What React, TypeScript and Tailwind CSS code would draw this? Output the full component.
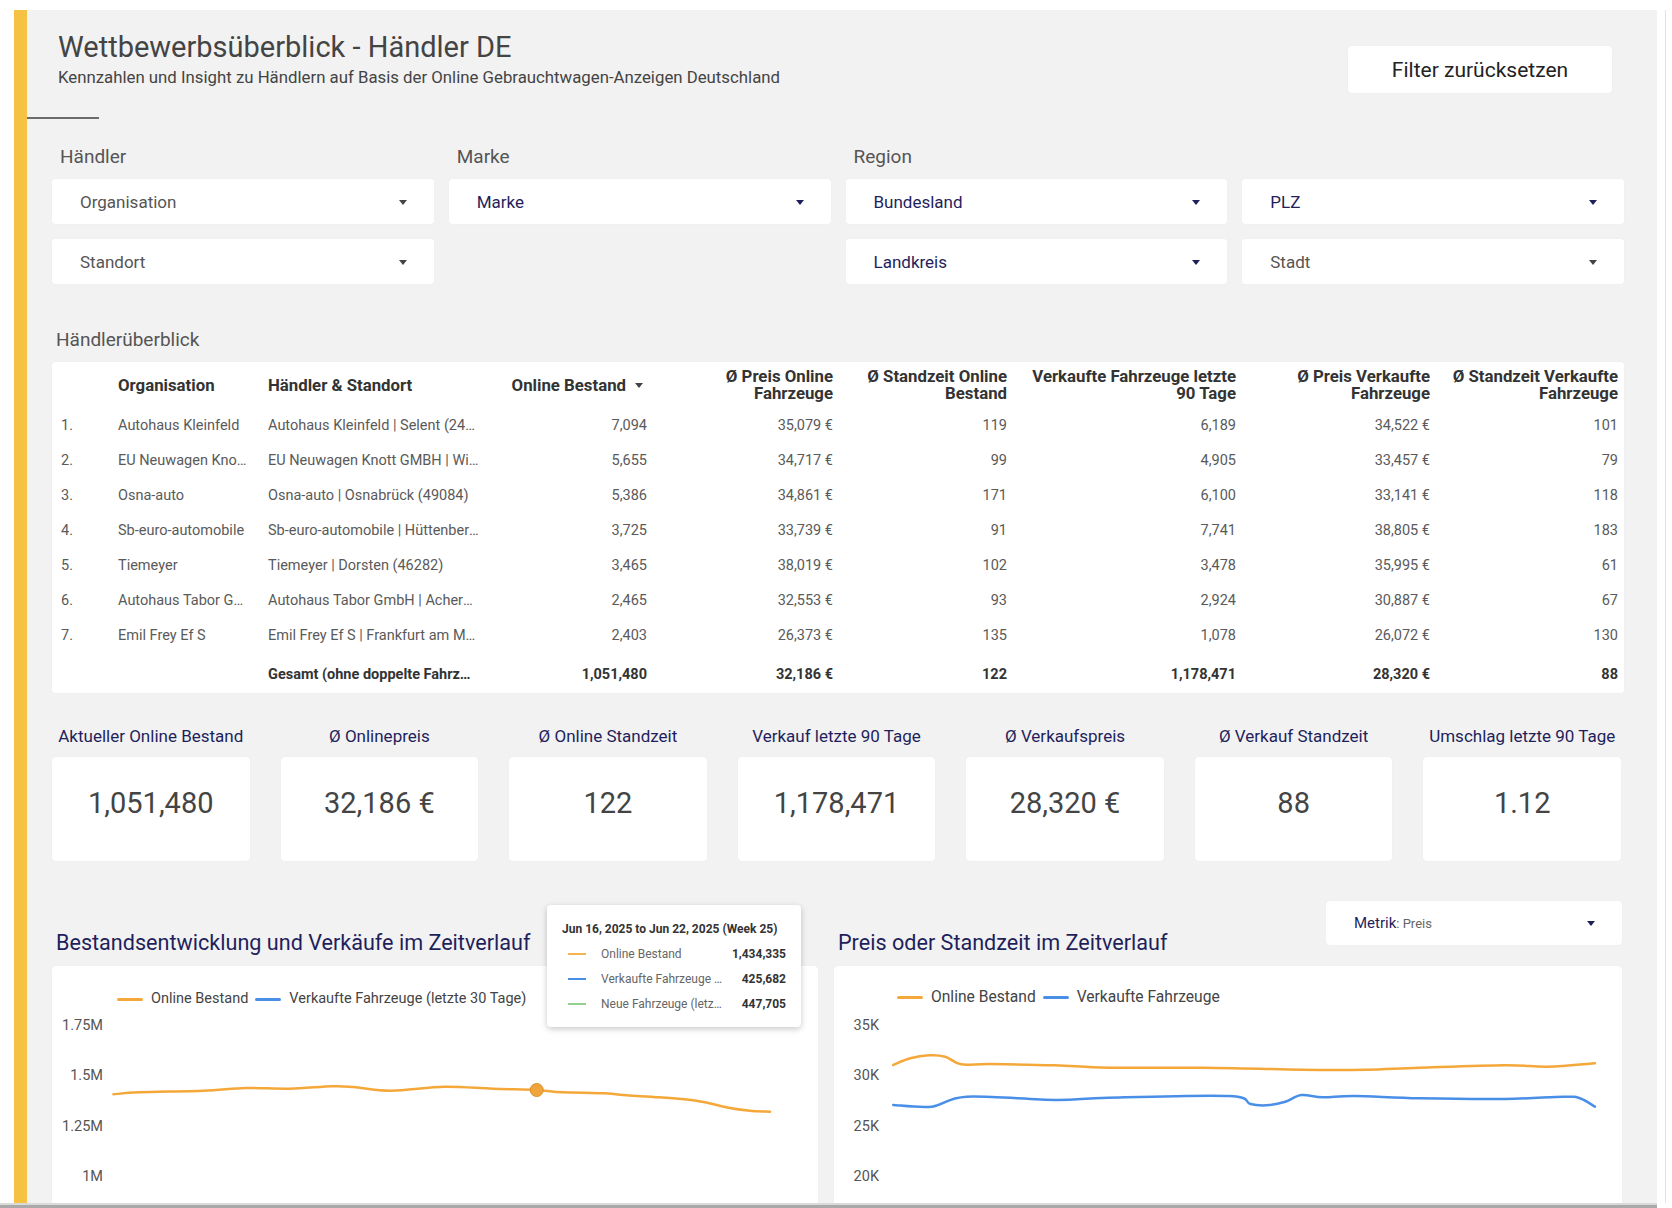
// Wettbewerbsüberblick dashboard — Looker-style report page with filters,
// dealer table, KPI tiles and two time-series charts.

type Pt = [number, number];

type DealerRow = {
  org: string;
  dealer: string;
  stock: string;
  price: string;
  days: string;
  sold: string;
  soldPrice: string;
  soldDays: string;
};

const ROWS: DealerRow[] = [
  { org: 'Autohaus Kleinfeld', dealer: 'Autohaus Kleinfeld | Selent (24238)', stock: '7,094', price: '35,079 €', days: '119', sold: '6,189', soldPrice: '34,522 €', soldDays: '101' },
  { org: 'EU Neuwagen Knott GMBH', dealer: 'EU Neuwagen Knott GMBH | Wittlich (54516)', stock: '5,655', price: '34,717 €', days: '99', sold: '4,905', soldPrice: '33,457 €', soldDays: '79' },
  { org: 'Osna-auto', dealer: 'Osna-auto | Osnabrück (49084)', stock: '5,386', price: '34,861 €', days: '171', sold: '6,100', soldPrice: '33,141 €', soldDays: '118' },
  { org: 'Sb-euro-automobile', dealer: 'Sb-euro-automobile | Hüttenberg (35625)', stock: '3,725', price: '33,739 €', days: '91', sold: '7,741', soldPrice: '38,805 €', soldDays: '183' },
  { org: 'Tiemeyer', dealer: 'Tiemeyer | Dorsten (46282)', stock: '3,465', price: '38,019 €', days: '102', sold: '3,478', soldPrice: '35,995 €', soldDays: '61' },
  { org: 'Autohaus Tabor GmbH', dealer: 'Autohaus Tabor GmbH | Achern (77855)', stock: '2,465', price: '32,553 €', days: '93', sold: '2,924', soldPrice: '30,887 €', soldDays: '67' },
  { org: 'Emil Frey Ef S', dealer: 'Emil Frey Ef S | Frankfurt am Main (60314)', stock: '2,403', price: '26,373 €', days: '135', sold: '1,078', soldPrice: '26,072 €', soldDays: '130' },
];

const KPIS = [
  { label: 'Aktueller Online Bestand', value: '1,051,480' },
  { label: 'Ø Onlinepreis', value: '32,186 €' },
  { label: 'Ø Online Standzeit', value: '122' },
  { label: 'Verkauf letzte 90 Tage', value: '1,178,471' },
  { label: 'Ø Verkaufspreis', value: '28,320 €' },
  { label: 'Ø Verkauf Standzeit', value: '88' },
  { label: 'Umschlag letzte 90 Tage', value: '1.12' },
];

// Chart points are in card-relative pixels (card top-left = 0,0).
const STOCK_LINE: Pt[] = [
  [61.5, 128.3], [87, 126.3], [151.5, 124.7], [194, 122], [237, 122.7], [280, 120.3],
  [301.5, 121], [339, 124.7], [392.5, 120.7], [440.8, 122.7], [484.7, 124], [510.4, 126.3],
  [553, 127.3], [574.7, 129.3], [606.8, 131.3], [644.3, 134.7], [676.4, 141.7], [697.9, 144.7], [718, 145.7],
];

const PRICE_ONLINE: Pt[] = [
  [59.2, 99], [76.3, 92.3], [95, 89.3], [111.2, 90.7], [127.2, 98.3], [156.7, 98], [221, 99.3],
  [274.5, 101.7], [370.9, 101.7], [467.3, 103.7], [531.6, 103.7], [585.2, 101.7], [670.9, 99.3],
  [713.7, 100.7], [760.9, 97.3],
];

const PRICE_SOLD: Pt[] = [
  [59.2, 139], [97.8, 140.7], [132.6, 130.7], [221, 134], [274.5, 131.7], [395, 130],
  [416.4, 138], [432.5, 139.3], [451.3, 135.7], [467.3, 129], [488.8, 131.3], [521, 130],
  [585.2, 132.3], [670.9, 133], [729.8, 130.7], [745.9, 132.3], [760.9, 140.7],
];

function smoothPath(pts: Pt[]): string {
  let d = `M${pts[0][0]},${pts[0][1]}`;
  for (let i = 0; i < pts.length - 1; i++) {
    const p0 = pts[i - 1] ?? pts[i];
    const p1 = pts[i];
    const p2 = pts[i + 1];
    const p3 = pts[i + 2] ?? p2;
    const c1x = p1[0] + (p2[0] - p0[0]) / 6;
    const c1y = p1[1] + (p2[1] - p0[1]) / 6;
    const c2x = p2[0] - (p3[0] - p1[0]) / 6;
    const c2y = p2[1] - (p3[1] - p1[1]) / 6;
    d += ` C${c1x.toFixed(1)},${c1y.toFixed(1)} ${c2x.toFixed(1)},${c2y.toFixed(1)} ${p2[0]},${p2[1]}`;
  }
  return d;
}

export default function App() {
  return (
    <div className="flex h-[1208px] w-[1672px] flex-col overflow-hidden bg-white font-['Roboto','Liberation_Sans',sans-serif]">
      <div className="h-[10px] shrink-0" />
      <div className="flex min-h-0 flex-1 overflow-hidden">
        <div className="w-[14px] shrink-0" />
        <div className="w-[13px] shrink-0 bg-[#f5c244]" />
        <main className="w-[1630px] shrink-0 bg-[#f2f2f2]">
          <Header />
          <div className="mt-[24px] h-[2px] w-[72px] bg-[#6b6b6b]" />
          <Filters />
          <div className="pl-[25px] pr-[33px]">
            <h2 className="mt-[45px] pl-[4px] text-[19px] leading-[22px] text-[#555]">Händlerüberblick</h2>
            <DealerTable />
            <KpiRow />
            <Charts />
          </div>
        </main>
        <div className="flex w-[15px] shrink-0">
          <div className="w-[8px]" />
          <div className="w-px bg-[#e2e2e2]" />
        </div>
      </div>
      <div className="h-[5px] w-[1657px] shrink-0 border-t-2 border-[#dadada] bg-[#a9a9a9]" />
    </div>
  );
}

// ── Header ───────────────────────────────────────────────────────────────────

function Header() {
  return (
    <div className="flex items-start justify-between pl-[31px] pr-[45px]">
      <div className="mt-[21px]">
        <h1 className="text-[29px] leading-[32px] text-[#444]">Wettbewerbsüberblick - Händler DE</h1>
        <p className="mt-[4px] text-[16.8px] leading-[20px] text-[#444]">
          Kennzahlen und Insight zu Händlern auf Basis der Online Gebrauchtwagen-Anzeigen Deutschland
        </p>
      </div>
      <button
        type="button"
        className="mt-[36px] flex h-[47px] w-[264px] items-center justify-center rounded-[4px] bg-white pt-[2px] text-[21px] text-[#222] shadow-[0_0_1px_rgba(0,0,0,0.08)]"
      >
        Filter zurücksetzen
      </button>
    </div>
  );
}

// ── Filters ──────────────────────────────────────────────────────────────────

function Filters() {
  return (
    <div className="pl-[25px] pr-[33px]">
      <div className="mt-[27px] grid grid-cols-4 gap-x-[15px] text-[19px] leading-[22px] text-[#555]">
        <span className="pl-[8px]">Händler</span>
        <span className="pl-[8px]">Marke</span>
        <span className="pl-[8px]">Region</span>
        <span />
      </div>
      <div className="mt-[11px] grid grid-cols-4 gap-x-[15px] gap-y-[15px]">
        <Select label="Organisation" />
        <Select label="Marke" active />
        <Select label="Bundesland" active />
        <Select label="PLZ" active />
        <Select label="Standort" />
        <div />
        <Select label="Landkreis" active />
        <Select label="Stadt" />
      </div>
    </div>
  );
}

function Select({ label, active }: { label: string; active?: boolean }) {
  return (
    <div className="flex h-[45px] items-center justify-between rounded-[3px] bg-white pl-[28px] pr-[27px] pt-[2px] shadow-[0_0_1px_rgba(0,0,0,0.08)]">
      <span className={`text-[17px] ${active ? 'text-[#1f1f5c]' : 'text-[#555]'}`}>{label}</span>
      <Caret className={active ? 'text-[#1f1f5c]' : 'text-[#444]'} />
    </div>
  );
}

function Caret({ className = '' }: { className?: string }) {
  return (
    <svg width="8" height="5" viewBox="0 0 8 5" className={className} aria-hidden>
      <path d="M0 0h8L4 5z" fill="currentColor" />
    </svg>
  );
}

// ── Dealer table ─────────────────────────────────────────────────────────────

const GRID = 'grid grid-cols-[57px_150px_216px_163px_186px_174px_229px_194px_188px]';

function DealerTable() {
  return (
    <div className="mt-[11px] h-[331px] rounded-[3px] bg-white pl-[9px] pr-[2px] shadow-[0_0_1px_rgba(0,0,0,0.08)]">
      <div className={`${GRID} h-[46px] items-center text-[16.8px] font-bold leading-[17px] text-[#333]`}>
        <span />
        <span>Organisation</span>
        <span>Händler &amp; Standort</span>
        <span className="flex items-center justify-end gap-[9px] pr-[4px]">
          Online Bestand
          <Caret className="text-[#444]" />
        </span>
        <span className="whitespace-nowrap text-right">Ø Preis Online<br />Fahrzeuge</span>
        <span className="whitespace-nowrap text-right">Ø Standzeit Online<br />Bestand</span>
        <span className="whitespace-nowrap text-right">Verkaufte Fahrzeuge letzte<br />90 Tage</span>
        <span className="whitespace-nowrap text-right">Ø Preis Verkaufte<br />Fahrzeuge</span>
        <span className="whitespace-nowrap text-right">Ø Standzeit Verkaufte<br />Fahrzeuge</span>
      </div>
      {ROWS.map((r, i) => (
        <div key={r.dealer} className={`${GRID} h-[35px] items-center text-[14.5px] text-[#5a5a5a]`}>
          <span>{i + 1}.</span>
          <span className="truncate pr-[17px]">{r.org}</span>
          <span className="truncate pr-[5px]">{r.dealer}</span>
          <span className="text-right">{r.stock}</span>
          <span className="text-right">{r.price}</span>
          <span className="text-right">{r.days}</span>
          <span className="text-right">{r.sold}</span>
          <span className="text-right">{r.soldPrice}</span>
          <span className="text-right">{r.soldDays}</span>
        </div>
      ))}
      <div className={`${GRID} h-[40px] items-center pt-[4px] text-[14.5px] font-bold text-[#333]`}>
        <span />
        <span />
        <span className="truncate pr-[8px]">Gesamt (ohne doppelte Fahrzeuge)</span>
        <span className="text-right">1,051,480</span>
        <span className="text-right">32,186 €</span>
        <span className="text-right">122</span>
        <span className="text-right">1,178,471</span>
        <span className="text-right">28,320 €</span>
        <span className="text-right">88</span>
      </div>
    </div>
  );
}

// ── KPI tiles ────────────────────────────────────────────────────────────────

function KpiRow() {
  return (
    <div className="mr-[3px] mt-[33px] grid grid-cols-7 gap-x-[31px]">
      {KPIS.map((k) => (
        <div key={k.label} className="flex flex-col items-center">
          <span className="whitespace-nowrap text-[17px] leading-[20px] text-[#1f1f5c]">{k.label}</span>
          <div className="mt-[11px] flex h-[104px] w-full justify-center rounded-[4px] bg-white pt-[29px] shadow-[0_0_1px_rgba(0,0,0,0.08)]">
            <span className="text-[29px] leading-[34px] text-[#444]">{k.value}</span>
          </div>
        </div>
      ))}
    </div>
  );
}

// ── Charts ───────────────────────────────────────────────────────────────────

function Charts() {
  return (
    <div className="mt-[40px] grid grid-cols-[766px_788px] gap-x-[16px]">
      <section className="relative">
        <div className="flex h-[65px] items-start">
          <h3 className="mt-[29px] pl-[4px] text-[21.6px] leading-[26px] text-[#1f1f5c]">
            Bestandsentwicklung und Verkäufe im Zeitverlauf
          </h3>
        </div>
        <div className="h-[300px] rounded-[4px] bg-white shadow-[0_0_1px_rgba(0,0,0,0.08)]">
          <Legend
            className="pl-[65px] pt-[24px] text-[14.5px]"
            items={[
              { color: 'bg-[#f5a83a]', label: 'Online Bestand' },
              { color: 'bg-[#4a8fe7]', label: 'Verkaufte Fahrzeuge (letzte 30 Tage)' },
            ]}
          />
          <svg width="766" height="258" viewBox="0 42 766 258" className="block" aria-hidden>
            <AxisLabels x={51} labels={['1.75M', '1.5M', '1.25M', '1M']} />
            <path d={smoothPath(STOCK_LINE)} fill="none" stroke="#f5a83a" strokeWidth="2.5" strokeLinecap="round" />
            <circle cx="484.7" cy="124" r="6.5" fill="#f0a53c" stroke="#d98f2a" strokeWidth="1" />
          </svg>
        </div>
        <Tooltip />
      </section>

      <section>
        <div className="flex h-[65px] items-start justify-between">
          <h3 className="mt-[29px] pl-[4px] text-[21.6px] leading-[26px] text-[#1f1f5c]">
            Preis oder Standzeit im Zeitverlauf
          </h3>
          <div className="flex h-[44px] w-[296px] items-center justify-between rounded-[4px] bg-white pl-[28px] pr-[27px] shadow-[0_0_1px_rgba(0,0,0,0.08)]">
            <span className="text-[15px] text-[#1f1f5c]">
              Metrik<span className="text-[13px] text-[#666]">: Preis</span>
            </span>
            <Caret className="text-[#1f1f5c]" />
          </div>
        </div>
        <div className="h-[300px] rounded-[4px] bg-white shadow-[0_0_1px_rgba(0,0,0,0.08)]">
          <Legend
            className="pl-[63px] pt-[22px] text-[15.6px]"
            items={[
              { color: 'bg-[#f5a83a]', label: 'Online Bestand' },
              { color: 'bg-[#4a8fe7]', label: 'Verkaufte Fahrzeuge' },
            ]}
          />
          <svg width="788" height="258" viewBox="0 42 788 258" className="block" aria-hidden>
            <AxisLabels x={45} labels={['35K', '30K', '25K', '20K']} />
            <path d={smoothPath(PRICE_ONLINE)} fill="none" stroke="#f5a83a" strokeWidth="2.5" strokeLinecap="round" />
            <path d={smoothPath(PRICE_SOLD)} fill="none" stroke="#4a8fe7" strokeWidth="2.5" strokeLinecap="round" />
          </svg>
        </div>
      </section>
    </div>
  );
}

function Legend({ items, className = '' }: { items: { color: string; label: string }[]; className?: string }) {
  return (
    <div className={`flex h-[42px] items-start ${className}`}>
      <div className="flex h-[18px] items-center gap-[7px] leading-[18px] text-[#444]">
        {items.map((it) => (
          <span key={it.label} className="flex items-center gap-[8px]">
            <span className={`h-[3px] w-[26px] rounded-full ${it.color}`} />
            {it.label}
          </span>
        ))}
      </div>
    </div>
  );
}

function AxisLabels({ x, labels }: { x: number; labels: string[] }) {
  return (
    <g fill="#555" fontSize="14.5" textAnchor="end">
      {labels.map((l, i) => (
        <text key={l} x={x} y={60 + i * 50.5} dominantBaseline="middle">
          {l}
        </text>
      ))}
    </g>
  );
}

function Tooltip() {
  const rows = [
    { color: 'bg-[#f5b352]', label: 'Online Bestand', value: '1,434,335' },
    { color: 'bg-[#4a8fe7]', label: 'Verkaufte Fahrzeuge (letzte 30 Tage)', value: '425,682' },
    { color: 'bg-[#93d08f]', label: 'Neue Fahrzeuge (letzte 30 Tage)', value: '447,705' },
  ];
  return (
    <div className="absolute left-[495px] top-[4px] z-10 flex h-[122px] w-[254px] flex-col rounded-[4px] bg-white shadow-[0_2px_6px_rgba(0,0,0,0.22)]">
      <div className="mt-[15px] pl-[15px] text-[12px] font-bold leading-[18px] text-[#333]">
        Jun 16, 2025 to Jun 22, 2025 (Week 25)
      </div>
      <div className="mt-[3px]">
        {rows.map((r) => (
          <div key={r.label} className="flex h-[25px] items-center pl-[21px] pr-[15px] text-[12px]">
            <span className={`h-[2px] w-[18px] shrink-0 ${r.color}`} />
            <span className="ml-[15px] w-[122px] truncate text-[#666]">{r.label}</span>
            <span className="ml-auto font-bold text-[#333]">{r.value}</span>
          </div>
        ))}
      </div>
    </div>
  );
}
